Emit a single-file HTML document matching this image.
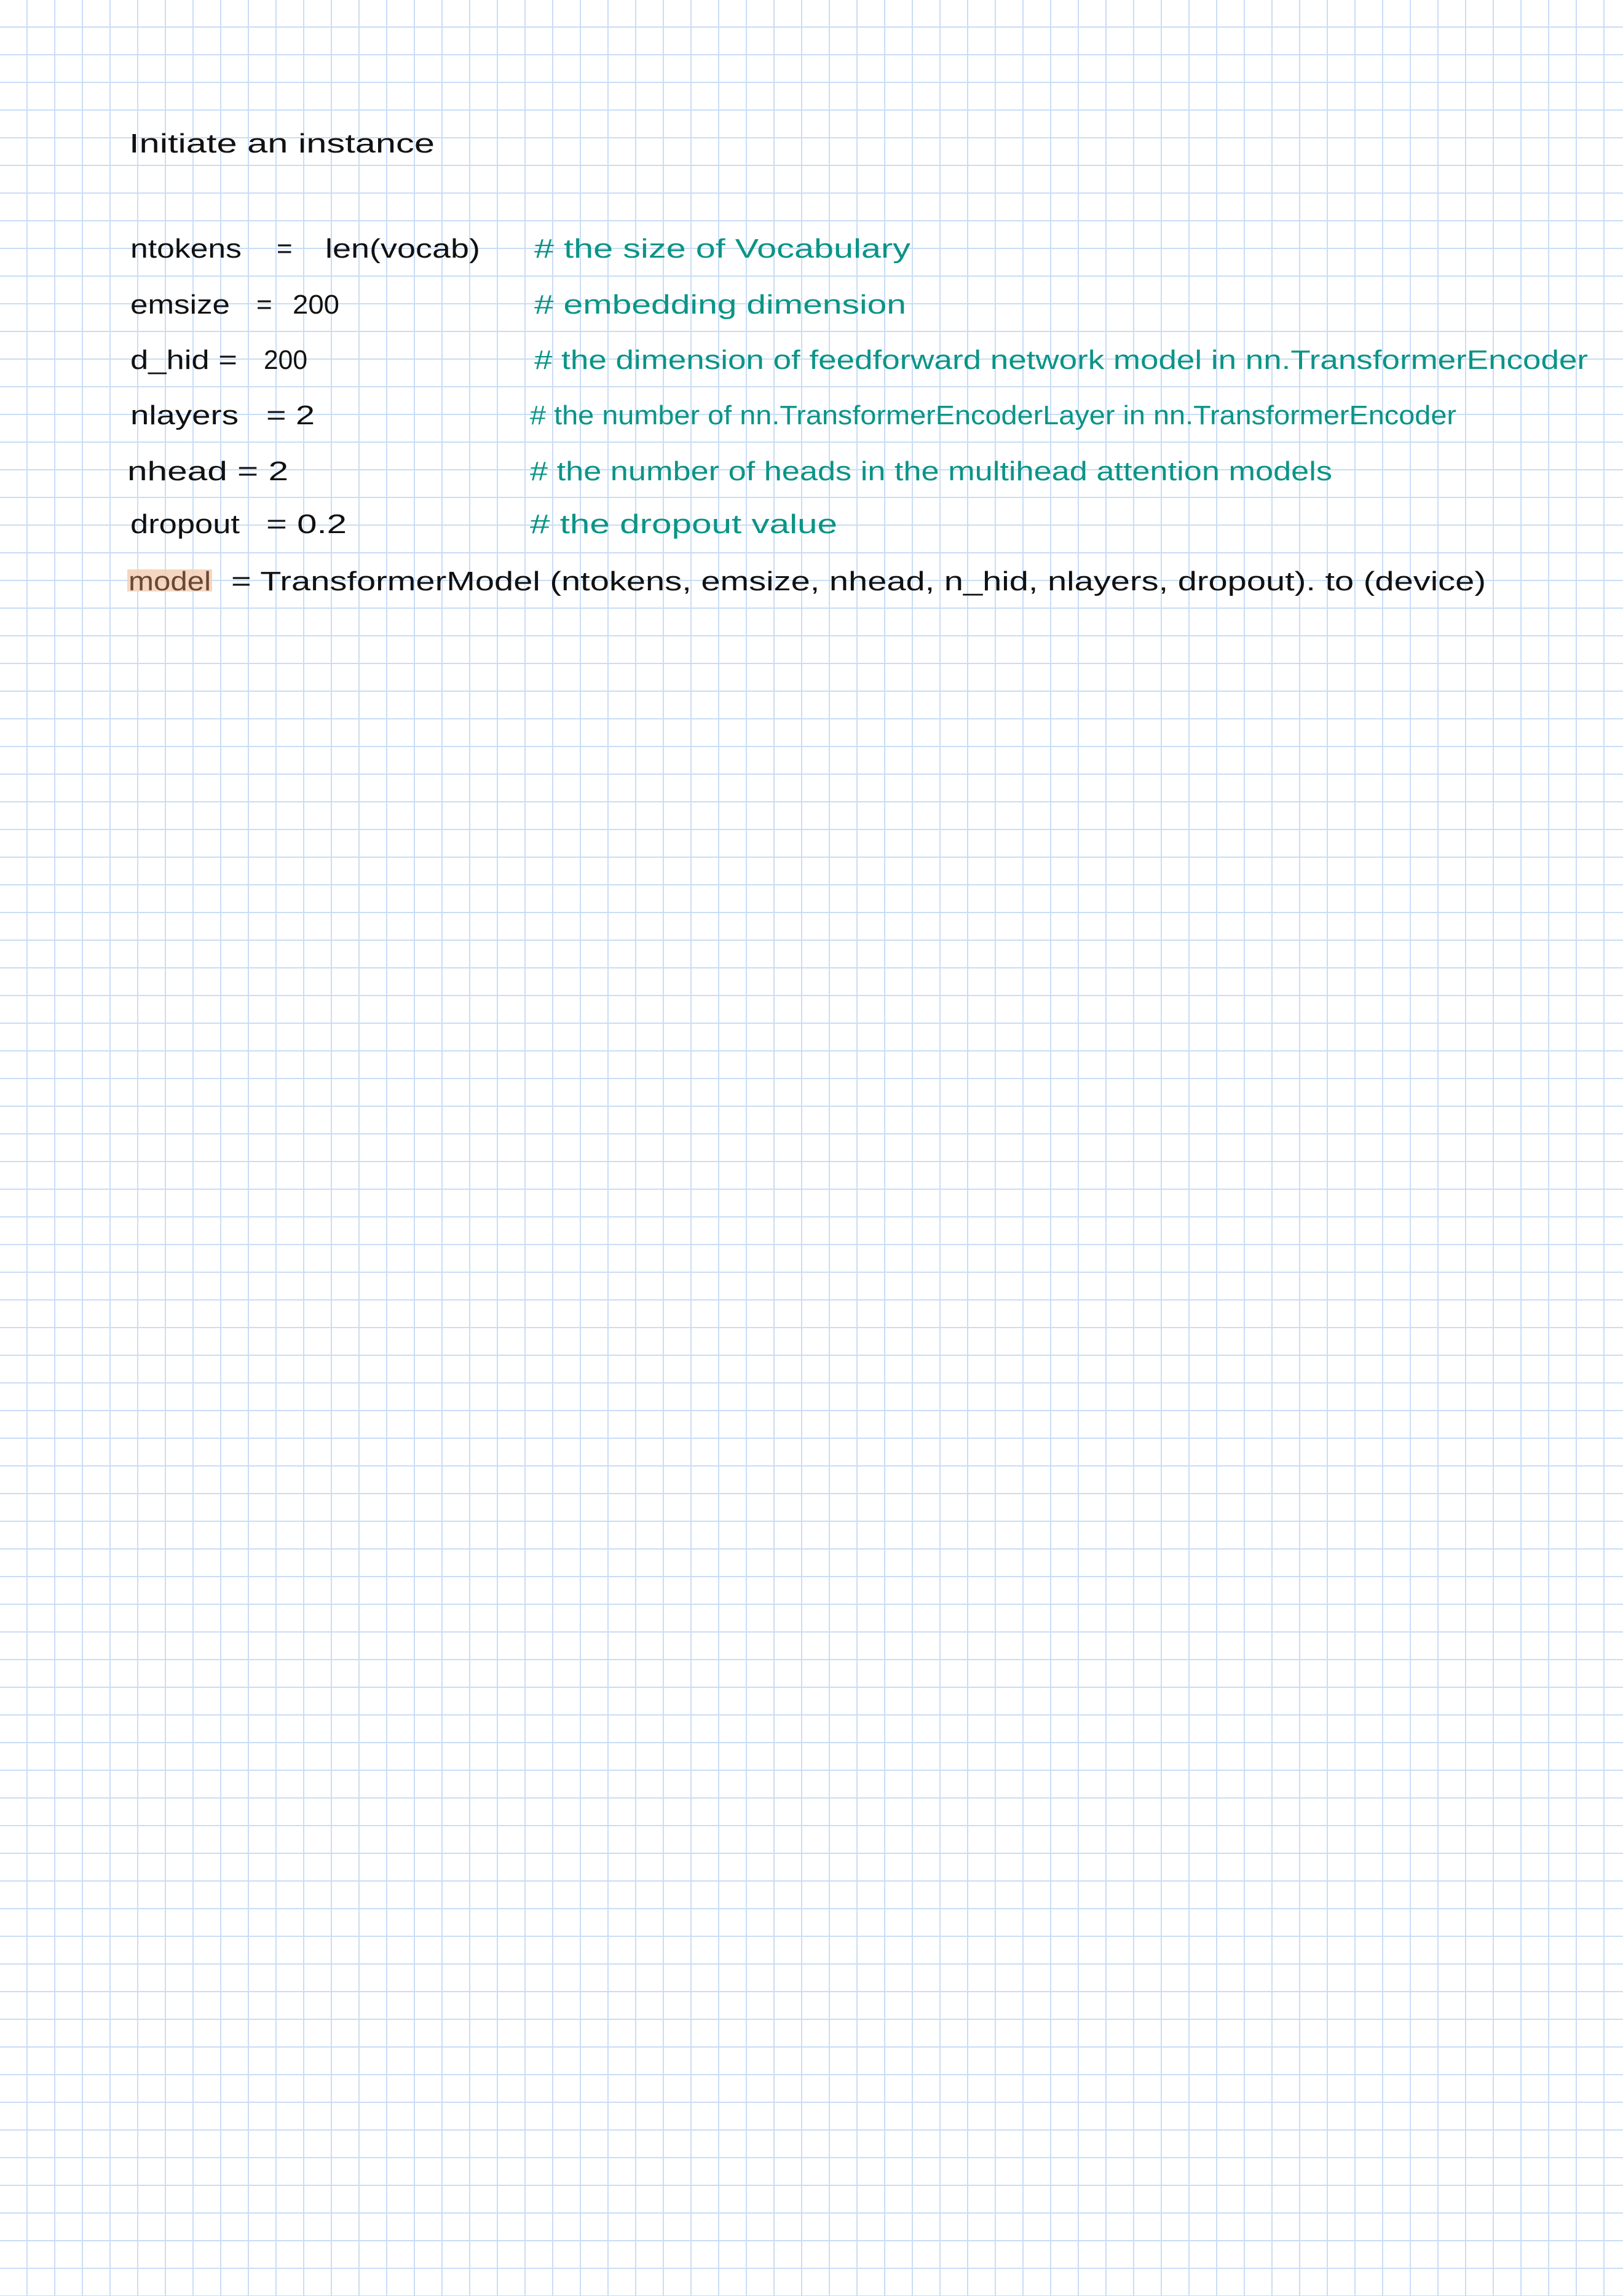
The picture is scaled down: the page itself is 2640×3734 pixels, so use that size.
<!DOCTYPE html>
<html><head><meta charset="utf-8"><style>
html,body{margin:0;padding:0;background:#fff;}
svg{display:block;}
text{font-family:"Liberation Sans",sans-serif;font-size:44px;}
.k{fill:#111;}
.c{fill:#0b9486;}
</style></head><body>
<svg width="2640" height="3734" viewBox="0 0 2640 3734" xmlns="http://www.w3.org/2000/svg">
<defs>
<pattern id="g" width="45" height="45" patternUnits="userSpaceOnUse">
<path d="M44 0V45M0 44H45" stroke="#c9ddf6" stroke-width="2" fill="none"/>
</pattern>
</defs>
<rect width="2640" height="3734" fill="#fff"/>
<rect width="2640" height="3734" fill="url(#g)"/>

<text class="k" x="210" y="248" textLength="497" lengthAdjust="spacingAndGlyphs">Initiate an instance</text>

<text class="k" x="212" y="419" textLength="181" lengthAdjust="spacingAndGlyphs">ntokens</text>
<text class="k" x="450" y="419">=</text>
<text class="k" x="529" y="419" textLength="252" lengthAdjust="spacingAndGlyphs">len(vocab)</text>
<text class="c" x="869" y="419" textLength="612" lengthAdjust="spacingAndGlyphs"># the size of Vocabulary</text>

<text class="k" x="212" y="510" textLength="162" lengthAdjust="spacingAndGlyphs">emsize</text>
<text class="k" x="417" y="510">=</text>
<text class="k" x="476" y="510" textLength="76" lengthAdjust="spacingAndGlyphs">200</text>
<text class="c" x="869" y="510" textLength="605" lengthAdjust="spacingAndGlyphs"># embedding dimension</text>

<text class="k" x="212" y="600" textLength="174" lengthAdjust="spacingAndGlyphs">d_hid =</text>
<text class="k" x="429" y="600" textLength="71" lengthAdjust="spacingAndGlyphs">200</text>
<text class="c" x="869" y="600" textLength="1714" lengthAdjust="spacingAndGlyphs"># the dimension of feedforward network model in nn.TransformerEncoder</text>

<text class="k" x="212" y="690" textLength="176" lengthAdjust="spacingAndGlyphs">nlayers</text>
<text class="k" x="433" y="690" textLength="79" lengthAdjust="spacingAndGlyphs">= 2</text>
<text class="c" x="862" y="690" textLength="1507" lengthAdjust="spacingAndGlyphs"># the number of nn.TransformerEncoderLayer in nn.TransformerEncoder</text>

<text class="k" x="207" y="781" textLength="262" lengthAdjust="spacingAndGlyphs">nhead = 2</text>
<text class="c" x="862" y="781" textLength="1305" lengthAdjust="spacingAndGlyphs"># the number of heads in the multihead attention models</text>

<text class="k" x="212" y="867" textLength="178" lengthAdjust="spacingAndGlyphs">dropout</text>
<text class="k" x="433" y="867" textLength="131" lengthAdjust="spacingAndGlyphs">= 0.2</text>
<text class="c" x="862" y="867" textLength="500" lengthAdjust="spacingAndGlyphs"># the dropout value</text>

<rect x="207" y="926" width="138" height="36" fill="#f3cfb6" opacity="0.85"/>
<text x="209" y="960" textLength="134" lengthAdjust="spacingAndGlyphs" style="fill:#6b4630">model</text>
<text class="k" x="376" y="960" textLength="2041" lengthAdjust="spacingAndGlyphs">= TransformerModel (ntokens, emsize, nhead, n_hid, nlayers, dropout). to (device)</text>
</svg>
</body></html>
